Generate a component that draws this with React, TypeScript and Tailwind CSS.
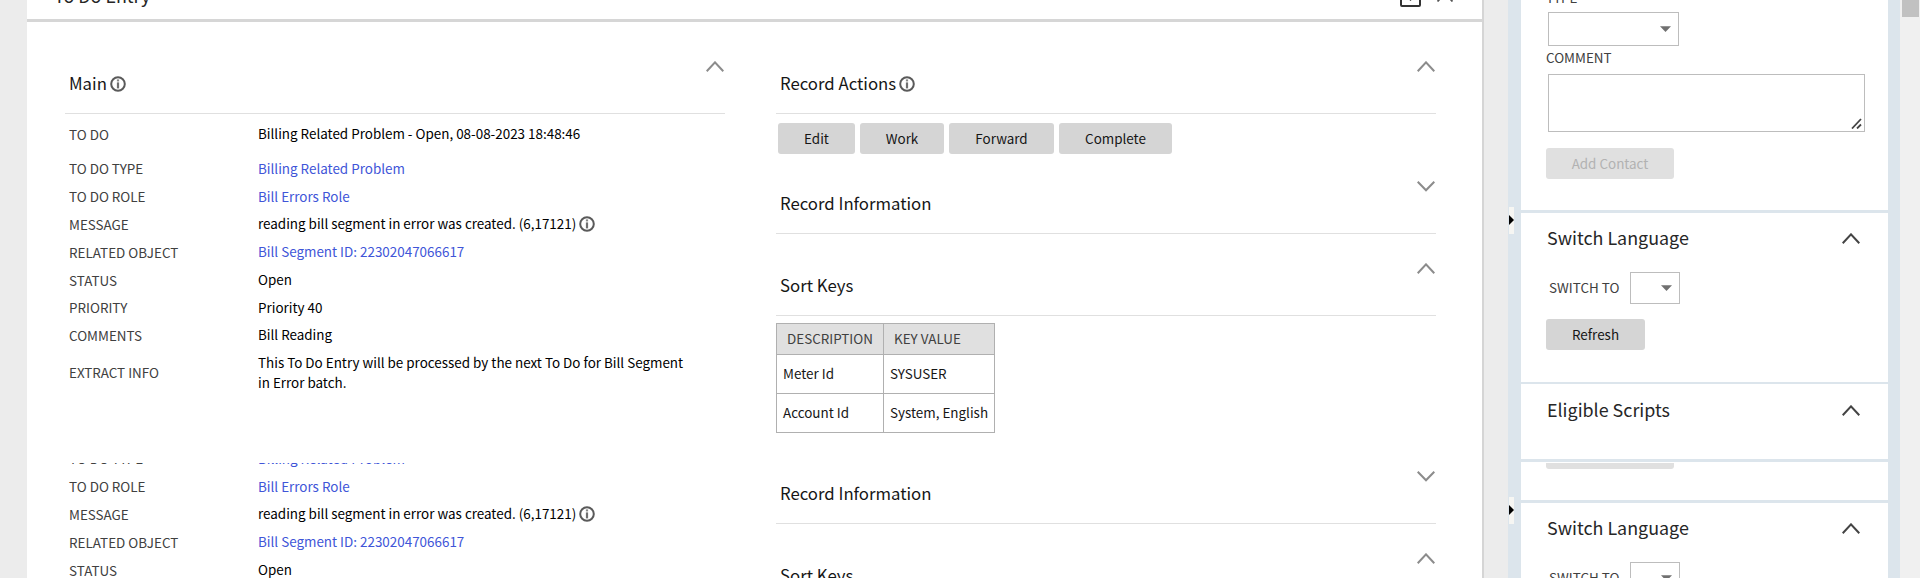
import React from "react";

const label = "text-[#404040]";
const link = "text-[#4055d8]";

function Info() {
  return (
    <svg width="16" height="16" viewBox="0 0 16 16" className="block shrink-0" fill="none">
      <circle cx="8" cy="8" r="6.8" stroke="#5a5a5a" strokeWidth="2" />
      <rect x="6.9" y="3.4" width="2.2" height="2" fill="#888" />
      <rect x="6.9" y="6.4" width="2.2" height="6" fill="#707070" />
    </svg>
  );
}

function Chevron({ down = false, dark = false }: { down?: boolean; dark?: boolean }) {
  return (
    <svg width="18" height="11" viewBox="0 0 18 11" className="block shrink-0" fill="none">
      <path d={down ? "M0.7 0.8L9 9.2L17.3 0.8" : "M0.7 10.2L9 1.4L17.3 10.2"} stroke={dark ? "#444" : "#8c8c8c"} strokeWidth="2.1" />
    </svg>
  );
}

function Section({ title, info, down }: { title: string; info?: boolean; down?: boolean }) {
  return (
    <div className="flex h-[54px] justify-between border-b border-[#e0e0e0]">
      <div className="flex items-center gap-[3px] self-start pl-[4px] pt-[11px] text-[16.75px] leading-[24px] text-[#161616]">
        <span>{title}</span>
        {info && <span className="pt-px"><Info /></span>}
      </div>
      <div className="pr-px pt-px"><Chevron down={down} /></div>
    </div>
  );
}

function Row({ name, h, children }: { name: string; h: string; children: React.ReactNode }) {
  return (
    <div className={`flex items-center ${h}`}>
      <div className={`w-[189px] shrink-0 pt-px ${label}`}>{name}</div>
      <div className="flex items-center gap-[3px] leading-[20px] text-black">{children}</div>
    </div>
  );
}

function Button({ w, children }: { w: string; children: string }) {
  return <button className={`h-[31px] rounded-[3px] bg-[#d5d5d5] pb-[2px] text-center text-[#161616] ${w}`}>{children}</button>;
}

function Select({ w }: { w: string }) {
  return (
    <div className={`flex items-center justify-end border border-[#bdbdbd] pr-[7px] ${w}`}>
      <svg width="11" height="6" viewBox="0 0 11 6" className="block"><path d="M0 0.3H11L5.5 6Z" fill="#707070" /></svg>
    </div>
  );
}

function PanelHead({ children }: { children: string }) {
  return (
    <div className="flex items-center justify-between pl-px pr-[28px] text-[17.9px] leading-[26px] text-[#262626]">
      <span>{children}</span>
      <span className="pt-[2px]"><Chevron dark /></span>
    </div>
  );
}

function Main() {
  return (
    <main className="flex h-full w-[1457px] shrink-0 flex-col border-r-2 border-[#d5d5d5] bg-white">
      <header className="flex h-[22px] shrink-0 justify-between border-b-[3px] border-[#d6d6d6] pl-[27px] pr-[29px]">
        <span className="-mt-[18px] text-[17.9px] leading-[26px] text-[#262626]">To Do Entry</span>
        <div className="flex gap-[16px]">
          <svg width="21" height="7" viewBox="0 0 21 7" fill="none" className="block">
            <path d="M1 -2V5q0 1 1 1H19q1 0 1 -1V-2" stroke="#333" strokeWidth="2" />
            <path d="M7.5 -2L10.5 1L13.5 -2Z" fill="#333" />
          </svg>
          <svg width="16" height="2" viewBox="0 0 16 2" fill="none" className="block"><path d="M0.5 1.5L3.5 -1.8M15.5 1.5L12.5 -1.8" stroke="#555" strokeWidth="1.8" /></svg>
        </div>
      </header>
      <div className="flex pl-[38px] pt-[38px]">
        <section className="mr-[51px] w-[660px] shrink-0">
          <Section title="Main" info />
          <div className="-mt-px pl-1">
            <Row name="TO DO" h="h-[40px]">Billing Related Problem - Open, 08-08-2023 18:48:46</Row>
            <Row name="TO DO TYPE" h="h-[29px]"><a className={link}>Billing Related Problem</a></Row>
            <Row name="TO DO ROLE" h="h-[27px]"><a className={link}>Bill Errors Role</a></Row>
            <Row name="MESSAGE" h="h-[28px]">reading bill segment in error was created. (6,17121) <span className="pt-[2px]"><Info /></span></Row>
            <Row name="RELATED OBJECT" h="h-[28px]"><a className={link}>Bill Segment ID: 22302047066617</a></Row>
            <Row name="STATUS" h="h-[28px]">Open</Row>
            <Row name="PRIORITY" h="h-[27px]">Priority 40</Row>
            <Row name="COMMENTS" h="h-[28px]">Bill Reading</Row>
            <Row name="EXTRACT INFO" h="h-[47px]"><span>This To Do Entry will be processed by the next To Do for Bill Segment<br />in Error batch.</span></Row>
          </div>
        </section>
        <section className="w-[660px] shrink-0">
          <Section title="Record Actions" info />
          <div className="flex gap-[5px] pl-[2px] pt-[9px]">
            <Button w="w-[77px]">Edit</Button>
            <Button w="w-[84px]">Work</Button>
            <Button w="w-[105px]">Forward</Button>
            <Button w="w-[113px]">Complete</Button>
          </div>
          <div className="mt-[26px]"><Section title="Record Information" down /></div>
          <div className="mt-[28px]"><Section title="Sort Keys" /></div>
          <table className="mt-[7px] border-collapse text-left">
            <thead>
              <tr className="h-[31px] bg-[#e0e0e0] text-[#404040]">
                <th className="w-[107px] border border-[#b0b0b0] p-0 pb-[2px] pl-[10px] font-normal">DESCRIPTION</th>
                <th className="w-[111px] border border-[#b0b0b0] p-0 pb-[2px] pl-[10px] font-normal">KEY VALUE</th>
              </tr>
            </thead>
            <tbody className="text-[#161616]">
              <tr className="h-[39px]"><td className="border border-[#b0b0b0] p-0 pb-[2px] pl-[6px]">Meter Id</td><td className="border border-[#b0b0b0] p-0 pb-[2px] pl-[6px]">SYSUSER</td></tr>
              <tr className="h-[39px]"><td className="border border-[#b0b0b0] p-0 pb-[2px] pl-[6px]">Account Id</td><td className="border border-[#b0b0b0] p-0 pb-[2px] pl-[6px]">System, English</td></tr>
            </tbody>
          </table>
        </section>
      </div>
    </main>
  );
}

function Side() {
  return (
    <aside className="flex h-full w-[392px] shrink-0 bg-[#dce5ec]">
      <div className="w-[13px] shrink-0 pl-px pt-[207px]">
        <div className="flex h-[27px] w-[5px] items-center bg-[#f6f6f3] pb-px">
          <svg width="5" height="10" viewBox="0 0 5 10"><path d="M0 0L5 5L0 10Z" fill="#000" /></svg>
        </div>
      </div>
      <div className="flex w-[367px] flex-col">
        <div className="h-[210px] shrink-0 bg-white pl-[25px]">
          <div className={`-mt-[13px] h-[25px] leading-[20px] ${label}`}>TYPE</div>
          <div className="pl-[2px]"><Select w="h-[34px] w-[131px]" /></div>
          <div className={`mt-[1px] leading-[20px] ${label}`}>COMMENT</div>
          <div className="ml-[2px] mt-[7px] flex h-[58px] w-[317px] items-end justify-end border border-[#bdbdbd] pb-[2px] pr-[2px]">
            <svg width="11" height="11" viewBox="0 0 11 11" fill="none"><path d="M1 10.5L10 1M6 10.5L10 6.5" stroke="#444" strokeWidth="1.8" /></svg>
          </div>
          <button className="mt-4 h-[31px] w-[128px] rounded-[3px] bg-[#e0e0e0] pb-[2px] text-[#b2b2b2]">Add Contact</button>
        </div>
        <div className="mt-[3px] h-[169px] shrink-0 bg-white pl-[25px] pt-[11px]">
          <PanelHead>Switch Language</PanelHead>
          <div className={`mt-[22px] flex h-[32px] items-center pl-[3px] ${label}`}>
            <span className="w-[81px] pb-[2px]">SWITCH TO</span>
            <Select w="h-[32px] w-[50px]" />
          </div>
          <div className="mt-[15px] flex"><Button w="w-[99px]">Refresh</Button></div>
        </div>
        <div className="mt-[2px] h-[75px] shrink-0 bg-white pl-[25px] pt-[12px]">
          <PanelHead>Eligible Scripts</PanelHead>
        </div>
        <div className="mt-[3px] h-[10px] shrink-0 bg-white" />
      </div>
    </aside>
  );
}

function Page() {
  return (
    <div className="flex h-[463px] bg-[#ececec] pl-[27px]">
      <Main />
      <div className="w-[24px] shrink-0" />
      <Side />
    </div>
  );
}

export default function App() {
  return (
    <div className="flex h-[578px] w-[1920px] overflow-hidden bg-[#f0f0f0] font-['Noto_Sans_CJK_SC',sans-serif] text-[13.43px] leading-[20px]">
      <div className="flex w-[1900px] shrink-0 flex-col">
        <div className="h-[463px] shrink-0 overflow-hidden"><Page /></div>
        <div className="h-[115px] shrink-0 overflow-hidden"><div className="-mt-[173px]"><Page /></div></div>
      </div>
      <div className="ml-[2px] h-[17px] w-[17px] bg-[#c1c1c1]" />
    </div>
  );
}
